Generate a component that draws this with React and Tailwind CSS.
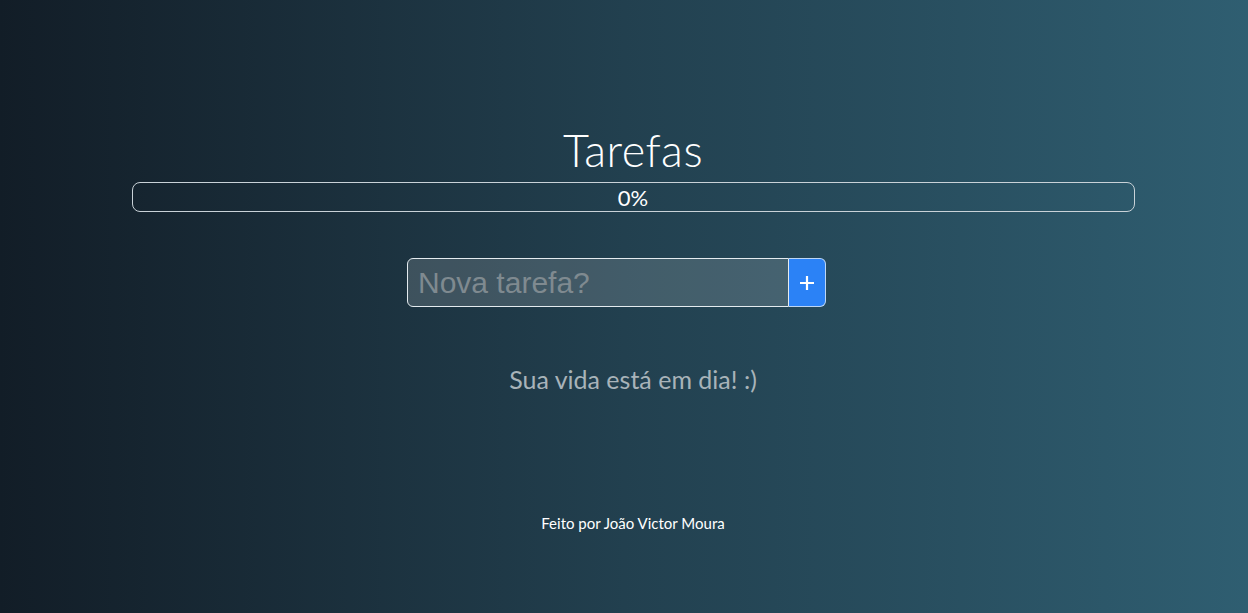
// App.jsx
import React, { useState } from "react";

const App = () => {
  const [tasks] = useState([]);
  const [text, setText] = useState("");

  const done = tasks.filter(t => t.done).length;
  const percent = tasks.length ? Math.round((done / tasks.length) * 100) : 0;

  return (
    <div className="w-full h-[613px] pl-[18px] bg-gradient-to-r from-[#121d27] via-[#22404f] to-[#2f5e71] flex flex-col items-center font-['Lato',sans-serif] text-white overflow-hidden">
      {/* Header */}
      <h1 className="mt-[124px] text-[45px] leading-[52px] font-light tracking-[0.5px]">Tarefas</h1>

      {/* Progress */}
      <div className="mt-[6px] w-[1003px] h-[30px] border border-[#c9d2d8] rounded-[8px] flex items-center justify-center">
        <span className="text-[22px] leading-none pt-[1px]">{percent}%</span>
      </div>

      {/* New task */}
      <form
        className="mt-[46px] mr-[33px] flex"
        onSubmit={(e) => e.preventDefault()}
      >
        <input
          type="text"
          value={text}
          onChange={(e) => setText(e.target.value)}
          placeholder="Nova tarefa?"
          className="w-[382px] h-[49px] pl-[10px] bg-white/15 border border-[#e4ebef] rounded-l-[6px] text-[30px] font-['Liberation_Sans',sans-serif] text-white placeholder:text-[#7f8a90] outline-none"
        />
        <button
          type="submit"
          className="w-[37px] h-[49px] bg-[#2b82f6] border border-l-0 border-[#bcd6f5] rounded-r-[6px] flex items-center justify-center"
        >
          <svg width="16" height="16" viewBox="0 0 16 16">
            <path d="M8 1v14M1 8h14" stroke="white" strokeWidth="2.2" />
          </svg>
        </button>
      </form>

      {/* Empty state */}
      <p className="mt-[57px] text-[25px] leading-[30px] text-[#a8b3b9]">Sua vida está em dia! :)</p>

      {/* Footer */}
      <footer className="mt-[120px] text-[15px] leading-[18px] text-white">Feito por João Victor Moura</footer>
    </div>
  );
};

export default App;
